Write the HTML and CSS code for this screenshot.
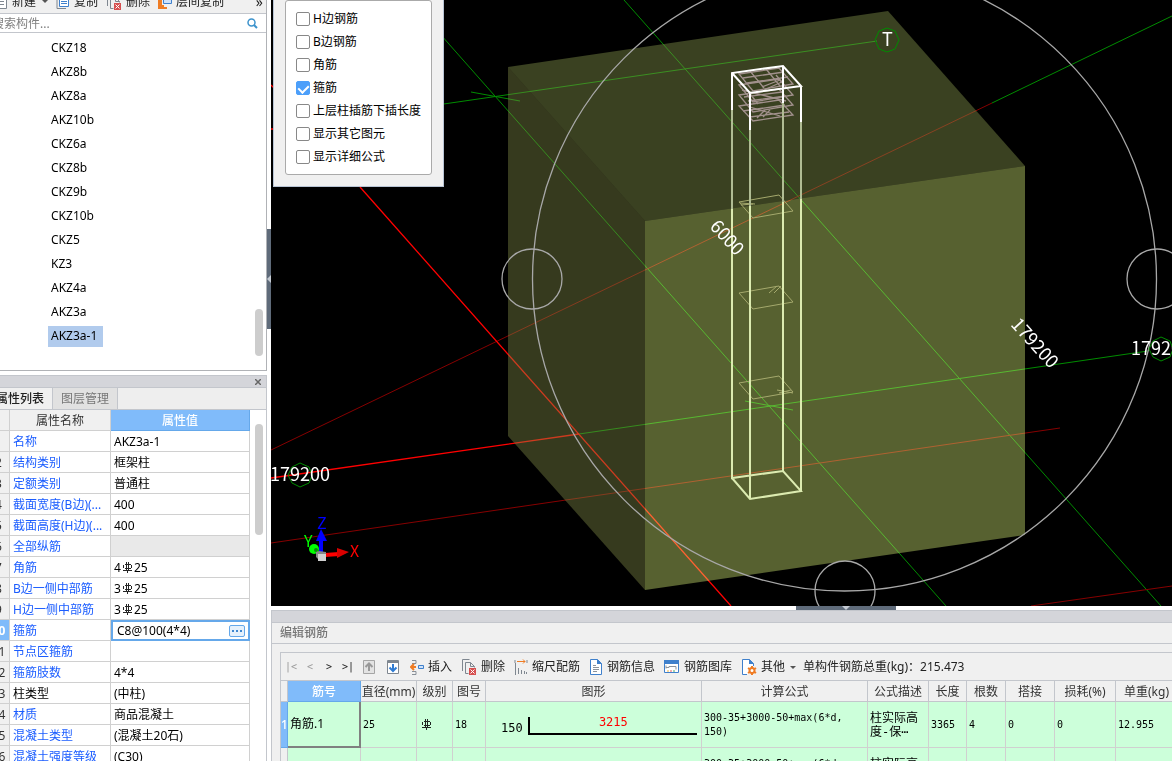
FILE: index.html
```html
<!DOCTYPE html>
<html lang="zh-CN">
<head>
<meta charset="UTF-8">
<meta name="viewport" content="width=device-width, initial-scale=1.0">
<title>编辑钢筋</title>
<link rel="stylesheet" href="styles.css">
</head>
<body>
<!-- Shared symbols -->
<svg class="defs" width="0" height="0" aria-hidden="true">
    <symbol id="rebar" viewBox="0 0 11 11">
        <path d="M2.500 2.500h6M2.500 6.500h6M1.500 3v3M9.500 3v3M4.500 0v9M6.500 0v9M1 8.500h9M5.500 8v3" fill="none" stroke="#000" stroke-opacity=".85" shape-rendering="crispEdges"/>
    </symbol>
    <symbol id="delete" viewBox="0 0 16 16">
        <path d="M1.500 12V.5h7M4.500 14.500v-11h5l4 4v1M9.500 3.500v4h4M4.500 14.500h3" fill="none" stroke="#7f8790"/>
        <path d="M8 9h7v7H8z" fill="#d65050"/>
        <path d="M9.500 10.500l4 4M13.500 10.500l-4 4" stroke="#fff"/>
    </symbol>
</svg>
<div class="app">
    <aside class="side">
        <section class="components">
            <div class="side-toolbar">
                <button><svg width="14" height="14" viewBox="0 0 14 14"><path d="M1.500.5h11v13h-11zM4 6.500h6M4 9.500h6" fill="#fff" stroke="#7f8790"/></svg>新建</button>
                <i class="caret"></i>
                <button class="copy"><svg width="14" height="14" viewBox="0 0 14 14"><path d="M1 2v11.500h9" fill="none" stroke="#7f8790"/><path d="M3.500.5h9v11h-9zM5 4.500h6M5 6.500h6M5 8.500h6" fill="#fff" stroke="#3f80cc"/></svg>复制</button>
                <button><svg width="16" height="16"><use href="#delete"/></svg>删除</button>
                <button><svg width="14" height="14" viewBox="0 0 14 14"><path d="M1 2v11h8M3 2v9h3" fill="none" stroke="#ef7c24" stroke-width="2"/><path d="M5.500.5h8v8h-8z" fill="#cfe2fa" stroke="#3f80cc"/></svg>层间复制</button>
                <button class="more" aria-label="更多">»</button>
            </div>
            <div class="search">
                <input type="text" placeholder="搜索构件..." aria-label="搜索构件">
                <svg width="11" height="11" viewBox="0 0 11 11"><circle cx="4.500" cy="4.500" r="3.500" fill="none" stroke="#3d93cc" stroke-width="1.500"/><path d="M7 7l3 3" stroke="#3d93cc" stroke-width="2"/></svg>
            </div>
            <div class="tree-wrap">
                <ul class="tree">
                    <li><span>CKZ18</span></li>
                    <li><span>AKZ8b</span></li>
                    <li><span>AKZ8a</span></li>
                    <li><span>AKZ10b</span></li>
                    <li><span>CKZ6a</span></li>
                    <li><span>CKZ8b</span></li>
                    <li><span>CKZ9b</span></li>
                    <li><span>CKZ10b</span></li>
                    <li><span>CKZ5</span></li>
                    <li><span>KZ3</span></li>
                    <li><span>AKZ4a</span></li>
                    <li><span>AKZ3a</span></li>
                    <li><span class="selected">AKZ3a-1</span></li>
                </ul>
                <div class="scroll tree-scroll"></div>
            </div>
        </section>
        <section class="props">
            <div class="dock-bar"><button class="close" aria-label="关闭"><svg width="6" height="6" viewBox="0 0 6 6"><path d="M0 0l6 6M6 0L0 6" stroke="#666" stroke-width="1.500"/></svg></button></div>
            <div class="tabs">
                <button class="tab active">属性列表</button>
                <button class="tab">图层管理</button>
            </div>
            <div class="props-body">
                <table class="prop-table">
                    <thead>
                        <tr><th class="num"></th><th class="name">属性名称</th><th class="value">属性值</th></tr>
                    </thead>
                    <tbody>
                        <tr><th>1</th><td>名称</td><td>AKZ3a-1</td></tr>
                        <tr><th>2</th><td>结构类别</td><td>框架柱</td></tr>
                        <tr><th>3</th><td>定额类别</td><td>普通柱</td></tr>
                        <tr><th>4</th><td>截面宽度(B边)(...</td><td>400</td></tr>
                        <tr><th>5</th><td>截面高度(H边)(...</td><td>400</td></tr>
                        <tr><th>6</th><td>全部纵筋</td><td class="disabled"></td></tr>
                        <tr><th>7</th><td>角筋</td><td>4<svg class="rebar" width="11" height="11"><use href="#rebar"/></svg>25</td></tr>
                        <tr><th>8</th><td>B边一侧中部筋</td><td>3<svg class="rebar" width="11" height="11"><use href="#rebar"/></svg>25</td></tr>
                        <tr><th>9</th><td>H边一侧中部筋</td><td>3<svg class="rebar" width="11" height="11"><use href="#rebar"/></svg>25</td></tr>
                        <tr class="current"><th>10</th><td>箍筋</td><td class="editing"><div class="editor"><input type="text" value="C8@100(4*4)" aria-label="箍筋"><button aria-label="编辑箍筋"><svg width="10" height="2" viewBox="0 0 10 2"><path d="M0 0h2v2H0zM4 0h2v2H4zM8 0h2v2H8z" fill="#3f87cf"/></svg></button></div></td></tr>
                        <tr><th>11</th><td>节点区箍筋</td><td></td></tr>
                        <tr><th>12</th><td>箍筋肢数</td><td>4*4</td></tr>
                        <tr><th>13</th><td class="plain">柱类型</td><td>(中柱)</td></tr>
                        <tr><th>14</th><td>材质</td><td>商品混凝土</td></tr>
                        <tr><th>15</th><td>混凝土类型</td><td>(混凝土20石)</td></tr>
                        <tr><th>16</th><td>混凝土强度等级</td><td>(C30)</td></tr>
                    </tbody>
                </table>
                <div class="scroll prop-scroll"></div>
            </div>
        </section>
    </aside>

    <div class="splitter"><div class="grip"><svg width="4" height="8" viewBox="0 0 4 8"><path d="M4 0v8L0 4z" fill="#c5cbd3"/></svg></div></div>

    <main class="main">
        <div class="viewer">
            <svg class="scene" viewBox="271 0 901 606" preserveAspectRatio="xMinYMin slice">
                <!-- Axis grid -->
                <g fill="none" stroke="#008c00">
                    <path d="M624 0L1161 606M410 0L946 606M430 106L877 41M992 103L1172 16M579 434L1148 351"/>
                    <path d="M471 92L520 101M745 401L793 410"/>
                </g>
                <path d="M271 450L992 103M271 543L1060 428M1031 606L1172 586" stroke="#860000" fill="none"/>
                <path d="M360 187L731 606M271 478L579 434M271 85l3 3M271 129h3" stroke="#f00" stroke-width="1.300" fill="none"/>
                <!-- Slab block -->
                <path d="M508 67L888 11L1025 166L645 221V590L508 436z" fill="#000" fill-opacity=".25"/>
                <g class="block">
                    <path d="M508 67L888 11L1025 166L645 221z" fill="#3a4121"/>
                    <path d="M508 67L645 221V590L508 436z" fill="#363a1e"/>
                    <path d="M645 221L1025 166V535L645 590z" fill="#576130"/>
                </g>
                <!-- Orbit rings -->
                <g fill="none" stroke="#a8a8a8" stroke-width="1.300">
                    <circle cx="844.500" cy="279" r="312"/>
                    <circle cx="532" cy="279" r="30"/>
                    <circle cx="1157" cy="279" r="30"/>
                    <circle cx="845" cy="591" r="30"/>
                </g>
                <!-- Stirrups -->
                <g fill="none" stroke="#a5a96d">
                    <path d="M739 202l40-7 14 16-40 7zM740 203l15 1M741 205l12 -1"/>
                    <path d="M739 293l40-7 14 16-40 7zM769 293l8-7M774 293l7-7"/>
                    <path d="M739 383l40-7 14 16-40 7zM777 390l16 3M779 393l12-3"/>
                </g>
                <g fill="none" stroke="#a1908c" stroke-width="1.300">
                    <path d="M739 74l40-6 14 16-40 7zM739 85l40-6 14 16-40 7zM739 95l40-6 14 16-40 7zM739 106l40-6 14 15-40 6z"/>
                    <path d="M743 78l41-6M747 83l41-6M750 71l14 17M766 69l14 17M744 97l38-5M748 101l38-5M742 90l44 11M743 111l42-6M750 117l39-5M762 87l18-7M764 90l20-9M744 86l14 18M757 118l8-8M763 117l7-7M750 107l30 9M776 75l10 12"/>
                </g>
                <!-- Column -->
                <g fill="none" stroke-width="2">
                    <path d="M732 110V221M750 130V221M783 103V203M801 122V200" stroke="#b0bc94"/>
                    <path d="M732 209V478L783 471L801 491L750 499L732 478M750 206V499M783 202V471M801 199V491" stroke="#dcebb0"/>
                    <path d="M732 110V73L783 66L801 86L750 93L732 73M750 93V130M783 66V103M801 86V122" stroke="#fff"/>
                </g>
                <g fill="none" stroke="#008c00">
                    <path d="M887 28l8 3 4 9-4 9-8 3-8-3-4-9 4-9zM300 463l9 4 3 8-3 8-9 4-8-4-4-8 4-8zM1161 337l9 4 3 8-3 8-9 4-8-4-4-8 4-8z"/>
                </g>
                <g class="labels">
                    <text x="882" y="46">T</text>
                    <text x="270" y="481">179200</text>
                    <text x="1131" y="355">179200</text>
                    <text transform="translate(709 227) rotate(48)">6000</text>
                    <text transform="translate(1010 325) rotate(48)">179200</text>
                </g>
                <!-- Axis gizmo -->
                <g>
                    <circle cx="314" cy="549" r="5" fill="#0f0"/><circle cx="316" cy="550" r="2" fill="#0a8a0a"/>
                    <path d="M321 552V538" stroke="#00f" stroke-width="4"/><path d="M321 529l6 12h-11z" fill="#00f"/>
                    <path d="M325 555l14-1" stroke="#f00" stroke-width="4"/><path d="M337 548l12 4-12 6z" fill="#d90000"/>
                    <path d="M316 552l3-1 7 1v8h-7l-3-3z" fill="#888"/><path d="M318 554h8v7h-8z" fill="#d0d0d0"/>
                    <g class="axis-names"><text x="317" y="529" fill="#00f">Z</text><text x="304" y="547" fill="#0f0">Y</text><text x="350" y="557" fill="#f00">X</text></g>
                </g>
            </svg>
            <div class="options">
                <div class="options-box">
                    <label><input type="checkbox">H边钢筋</label>
                    <label><input type="checkbox">B边钢筋</label>
                    <label><input type="checkbox">角筋</label>
                    <label><input type="checkbox" checked>箍筋</label>
                    <label><input type="checkbox">上层柱插筋下插长度</label>
                    <label><input type="checkbox">显示其它图元</label>
                    <label><input type="checkbox">显示详细公式</label>
                </div>
            </div>
            <div class="bottom-grip"><svg width="8" height="4" viewBox="0 0 8 4"><path d="M0 0h8L4 4z" fill="#c5cbd3"/></svg></div>
        </div>

        <section class="editor-dock">
            <div class="dock-bar"></div>
            <h2>编辑钢筋</h2>
            <div class="rebar-panel">
                <div class="rebar-toolbar">
                    <button class="nav off">|&lt;</button>
                    <button class="nav off">&lt;</button>
                    <button class="nav">&gt;</button>
                    <button class="nav">&gt;|</button>
                    <button class="move" aria-label="上移"><svg width="14" height="14" viewBox="0 0 14 14"><path d="M1.500.5h11v13h-11z" fill="#e3e3e3" stroke="#a5a5a5"/><path d="M7 11V4M3.500 7L7 3.500 10.500 7" fill="none" stroke="#999" stroke-width="2"/></svg></button>
                    <button class="move" aria-label="下移"><svg width="14" height="14" viewBox="0 0 14 14"><path d="M1.500.5h11v13h-11z" fill="#fff" stroke="#7f8790"/><path d="M1 1h12v2H1z" fill="#7f8790"/><path d="M7 4v7M3.500 7.500L7 11l3.500-3.500" fill="none" stroke="#2f7bd2" stroke-width="2"/></svg></button>
                    <button><svg width="14" height="16" viewBox="0 0 14 16"><path d="M2 1.500h4v3H2M2 12.500h4v3H2" fill="none" stroke="#888f97"/><path d="M6 8H1M4 5L1 8l3 3" fill="none" stroke="#ef7c24" stroke-width="2"/><path d="M8.500 6.500h5v3h-5z" fill="#cfe2fa" stroke="#3f80cc"/></svg>插入</button>
                    <button><svg width="16" height="16"><use href="#delete"/></svg>删除</button>
                    <button><svg width="14" height="16" viewBox="0 0 14 16"><path d="M1.500 4v12M4.500 9v6M7.500 11v4M10.500 12v3M12.500 13v2" stroke="#7f8790"/><path d="M1 1v3M13 1v3" stroke="#7f8790"/><path d="M3 2.500h8M9 .5l2 2-2 2" fill="none" stroke="#ef7c24"/></svg>缩尺配筋</button>
                    <button><svg width="14" height="16" viewBox="0 0 14 16"><path d="M1.500.5h7l4 4v11h-11z" fill="#fff" stroke="#3f80cc"/><path d="M8 0l5 5H8z" fill="#3f80cc"/><path d="M4 6.500h3M4 8.500h6M4 10.500h6M4 12.500h4" stroke="#8c939b"/></svg>钢筋信息</button>
                    <button><svg width="16" height="14" viewBox="0 0 16 14"><path d="M.5.5h14v12H.5z" fill="#fff" stroke="#3f80cc"/><path d="M0 0h15v4H0z" fill="#3f80cc"/><path d="M2 7.500h3v-1h7v3M2 5.500v3" fill="none" stroke="#8c939b"/><path d="M3 11h2" stroke="#f4b33c"/><path d="M6 11h2" stroke="#e85b5b"/><path d="M9 11h2" stroke="#48a85c"/></svg>钢筋图库</button>
                    <button><svg width="16" height="16" viewBox="0 0 16 16"><path d="M6 15.500H1.500V.5h7l4 4V7" fill="#fff" stroke="#3f80cc"/><path d="M8 0l5 5H8z" fill="#3f80cc"/><path d="M11 7v9M7 9l8 5M15 9l-8 5" stroke="#ef7c24" stroke-width="2"/><circle cx="11" cy="11.500" r="2.500" fill="#fff" stroke="#ef7c24" stroke-width="2"/></svg>其他</button>
                    <i class="caret"></i>
                    <span>单构件钢筋总重(kg)：215.473</span>
                </div>
                <table class="rebar-table">
                    <colgroup>
                        <col class="c-num"><col class="c-id"><col class="c-dia"><col class="c-grade"><col class="c-no"><col class="c-shape"><col class="c-formula"><col class="c-desc"><col class="c-len"><col class="c-count"><col class="c-lap"><col class="c-loss"><col class="c-weight">
                    </colgroup>
                    <thead>
                        <tr><th></th><th class="selected">筋号</th><th>直径(mm)</th><th>级别</th><th>图号</th><th>图形</th><th>计算公式</th><th>公式描述</th><th>长度</th><th>根数</th><th>搭接</th><th>损耗(%)</th><th>单重(kg)</th></tr>
                    </thead>
                    <tbody>
                        <tr>
                            <th>1</th>
                            <td class="focus">角筋.1</td>
                            <td>25</td>
                            <td><svg class="grade" width="11" height="11"><use href="#rebar"/></svg></td>
                            <td>18</td>
                            <td><div class="shape"><span>150</span><div class="bar">3215</div></div></td>
                            <td>300-35+3000-50+max(6*d,<br>150)</td>
                            <td class="desc">柱实际高<br>度-保⋯</td>
                            <td>3365</td>
                            <td>4</td>
                            <td>0</td>
                            <td>0</td>
                            <td>12.955</td>
                        </tr>
                        <tr>
                            <th class="idle"></th><td></td><td></td><td></td><td></td><td></td>
                            <td>300-35+3000-50+max(6*d,<br>150)</td>
                            <td class="desc">柱实际高<br>度-保⋯</td>
                            <td></td><td></td><td></td><td></td><td></td>
                        </tr>
                    </tbody>
                </table>
            </div>
        </section>
    </main>
</div>
</body>
</html>
```

FILE: styles.css
```css
/* Basic page styling */
* {
    box-sizing: border-box;
}
body {
    margin: 0;
    font-family: "Noto Sans", "Noto Sans CJK SC", sans-serif;
    font-size: 12px;
    line-height: 16px;
    color: #000;
    background: #fff;
}
button {
    display: flex;
    align-items: center;
    gap: 5px;
    padding: 0;
    border: 0;
    background: none;
    font: inherit;
    color: #222;
    white-space: nowrap;
}
input {
    font: inherit;
}
table {
    border-collapse: separate;
    border-spacing: 0;
    table-layout: fixed;
}
svg {
    flex: none;
}
.defs {
    position: absolute;
}
.app {
    display: flex;
    height: 100vh;
    overflow: hidden;
}
.caret {
    border: 3px solid transparent;
    border-top-color: #555;
    border-bottom: 0;
}
.scroll {
    width: 8px;
    border-radius: 4px;
    background: #cdcdcd;
}
.dock-bar {
    display: flex;
    justify-content: flex-end;
    align-items: center;
    height: 13px;
    padding-right: 5px;
    background: #d4d5da;
    border-top: 1px solid #c3c6cc;
    border-bottom: 1px solid #c3c6cc;
}

/* Left column */
.side {
    display: flex;
    flex-direction: column;
    flex: none;
    width: 267px;
    overflow: hidden;
}
.components {
    flex: none;
    border-right: 1px solid #b0b2b6;
    border-bottom: 1px solid #b0b2b6;
}
.side-toolbar {
    display: flex;
    align-items: center;
    gap: 8px;
    height: 26px;
    margin: -12px 0 0 -6px;
    padding-top: 2px;
    background: #f0f0f0;
    border-bottom: 1px solid #c3c6cc;
}
.side-toolbar button {
    gap: 4px;
}
.side-toolbar .caret {
    margin-left: -2px;
}
.side-toolbar .more {
    margin: 0 3px 0 auto;
    font-size: 14px;
}
.search {
    display: flex;
    align-items: center;
    height: 19px;
    margin-left: -8px;
    padding: 1px 8px 0 0;
    border-bottom: 1px solid #c3c6cc;
}
.search input {
    flex: 1;
    min-width: 0;
    padding: 0;
    border: 0;
    outline: 0;
}
.search input::placeholder {
    color: #808080;
}
.tree-wrap {
    display: flex;
    justify-content: space-between;
    align-items: flex-end;
    padding: 3px 3px 14px 0;
}
.tree {
    margin: 0;
    padding: 0 0 8px 48px;
    list-style: none;
}
.tree li {
    display: flex;
    align-items: center;
    height: 24px;
}
.tree span {
    padding: 2px 6px 3px 3px;
}
.tree .selected {
    background: #b1cbed;
}
.tree-scroll {
    height: 47px;
}

/* Properties */
.props {
    flex: 1;
    min-height: 0;
    margin-top: 4px;
    overflow: hidden;
    border-right: 1px solid #c3c6cc;
}
.tabs {
    display: flex;
    height: 22px;
    margin-left: -8px;
    background: #eee;
    border-bottom: 1px solid #c3c6cc;
}
.tab {
    padding: 0 8px;
    border-right: 1px solid #c3c6cc;
    background: #e1e1e1;
    color: #777;
}
.tab.active {
    background: #f0f0f0;
    color: #222;
    font-weight: 500;
    padding: 0 8px 0 4px;
}
.props-body {
    display: flex;
    justify-content: space-between;
    margin-left: -12px;
    padding-right: 3px;
}
.prop-table {
    width: 262px;
}
.prop-table .num {
    width: 22px;
}
.prop-table .name {
    width: 101px;
}
.prop-table th,
.prop-table td {
    height: 21px;
    padding: 2px 3px 0;
    border-right: 1px solid #d0d0d0;
    border-bottom: 1px solid #d0d0d0;
    font-weight: normal;
    white-space: nowrap;
}
.prop-table td:nth-child(2) {
    color: #1a5cff;
}
.prop-table td.plain {
    color: #000;
}
.prop-table th {
    background: #f0f0f0;
    color: #333;
}
.prop-table th.value {
    background: #80bbfa;
    border-color: #65a8ea;
    color: #fff;
    font-weight: 500;
}
.prop-table .current th {
    background: #80bbfa;
    color: #fff;
    font-weight: bold;
}
.prop-table .disabled {
    background: #e9e9e9;
}
.prop-table .editing {
    padding: 0;
    border: 0;
}
.rebar {
    margin: 0 1px;
    vertical-align: -1px;
}
.editor {
    display: flex;
    align-items: center;
    height: 21px;
    padding: 0 3px 0 4px;
    border: 2px solid #65a8ea;
}
.editor input {
    flex: 1;
    min-width: 0;
    height: 16px;
    padding: 0;
    border: 0;
    outline: 0;
}
.editor button {
    justify-content: center;
    width: 16px;
    height: 12px;
    border: 1px solid #65a8ea;
    border-radius: 2px;
    background: #e6f1fc;
}
.prop-scroll {
    height: 111px;
    margin-top: 14px;
}

/* Splitter */
.splitter {
    flex: none;
    width: 4px;
    padding-top: 229px;
}
.grip {
    display: flex;
    align-items: center;
    height: 100px;
    background: #5f6b7a;
}

/* 3D view */
.main {
    display: flex;
    flex-direction: column;
    flex: 1;
    min-width: 0;
}
.viewer {
    position: relative;
    flex: 1;
    min-height: 0;
    border-bottom: 4px solid #fff;
    background: #000;
}
.scene {
    display: block;
    width: 100%;
    height: 100%;
}
.block path {
    mix-blend-mode: screen;
}
.labels {
    font-family: "Noto Sans CJK SC", sans-serif;
    font-size: 18px;
    fill: #fff;
}
.axis-names {
    font-family: "Noto Sans CJK SC", sans-serif;
    font-size: 16px;
}
.options {
    position: absolute;
    top: 0;
    left: 2px;
    width: 171px;
    padding: 0 11px 11px;
    background: #f0f0f0;
    border: 1px solid #b8c4d4;
    border-top: 0;
}
.options-box {
    padding: 6px 10px;
    border: 1px solid #aaa;
    border-radius: 3px;
    background: #fff;
}
.options label {
    display: flex;
    align-items: center;
    gap: 3px;
    height: 23px;
    white-space: nowrap;
}
.options input {
    appearance: none;
    flex: none;
    width: 14px;
    height: 14px;
    margin: 0;
    border: 1px solid #888;
    border-radius: 2px;
    background: #fff;
}
.options input:checked {
    display: flex;
    justify-content: center;
    align-items: flex-start;
    padding-top: 1px;
    border-color: #4c9ffa;
    background: #4c9ffa;
}
.options input:checked::before {
    content: "";
    width: 5px;
    height: 8px;
    border: solid #fff;
    border-width: 0 2px 2px 0;
    transform: rotate(45deg);
}
.bottom-grip {
    position: absolute;
    bottom: -4px;
    left: calc(50% + 74px);
    display: flex;
    justify-content: center;
    width: 100px;
    height: 4px;
    background: #5f6b7a;
}

/* Rebar editor */
.editor-dock {
    flex: none;
    height: 151px;
    overflow: hidden;
    background: #f0f0f0;
    border-left: 1px solid #c3c6cc;
}
.editor-dock h2 {
    height: 21px;
    margin: 0;
    padding-left: 8px;
    font-size: 12px;
    font-weight: 500;
    line-height: 20px;
    color: #777;
    border-bottom: 1px solid #c3c6cc;
}
.rebar-panel {
    margin: 8px 0 0 8px;
    border: 1px solid #c3c6cc;
    border-right: 0;
}
.rebar-toolbar {
    display: flex;
    align-items: center;
    gap: 9px;
    height: 28px;
    padding: 1px 0 0 5px;
    border-bottom: 1px solid #c3c6cc;
    white-space: nowrap;
    color: #222;
}
.rebar-toolbar button {
    gap: 4px;
}
.rebar-toolbar .nav {
    justify-content: center;
    width: 10px;
    font-family: "DejaVu Sans Mono", monospace;
    font-size: 10px;
}
.rebar-toolbar .off {
    color: #999;
}
.rebar-toolbar .move {
    width: 15px;
}
.rebar-toolbar .caret {
    margin: 0 -2px 0 -4px;
}
.rebar-table {
    width: 897px;
    min-width: 100%;
}
.c-num {
    width: 7px;
}
.c-id {
    width: 73px;
}
.c-dia {
    width: 56px;
}
.c-grade {
    width: 36px;
}
.c-no {
    width: 33px;
}
.c-shape {
    width: 216px;
}
.c-formula {
    width: 166px;
}
.c-desc,
.c-loss {
    width: 61px;
}
.c-len {
    width: 38px;
}
.c-count {
    width: 39px;
}
.c-lap {
    width: 49px;
}
.rebar-table th {
    height: 21px;
    padding: 1px 0 0;
    background: #f0f0f0;
    border-right: 1px solid #c3c6cc;
    border-bottom: 1px solid #c3c6cc;
    color: #333;
    font-weight: normal;
    white-space: nowrap;
}
.rebar-table th.selected,
.rebar-table tbody th {
    background: #80bbfa;
    border-color: #65a8ea;
    color: #fff;
    font-weight: 500;
}
.rebar-table tbody th.idle {
    background: #f0f0f0;
    border-color: #c3c6cc;
}
.rebar-table td {
    height: 46px;
    padding: 0 2px;
    background: #ccffda;
    border-right: 1px solid #d0d0d0;
    border-bottom: 1px solid #d0d0d0;
    font-family: "DejaVu Sans Mono", "Noto Sans CJK SC", monospace;
    font-size: 10px;
    line-height: 14px;
    white-space: nowrap;
}
.rebar-table td.desc {
    font-size: 12px;
}
.rebar-table td.focus {
    border-right: 2px solid #808080;
    border-bottom: 2px solid #808080;
    font-family: "Noto Sans", "Noto Sans CJK SC", sans-serif;
    font-size: 12px;
}
.grade {
    display: block;
    margin-left: 2px;
}
.shape {
    display: flex;
    align-items: flex-end;
    gap: 5px;
    padding: 2px 2px 0 13px;
    font-size: 12px;
}
.bar {
    flex: 1;
    height: 18px;
    border-left: 2px solid #000;
    border-bottom: 2px solid #000;
    color: #f00;
    line-height: 10px;
    text-align: center;
}
```
